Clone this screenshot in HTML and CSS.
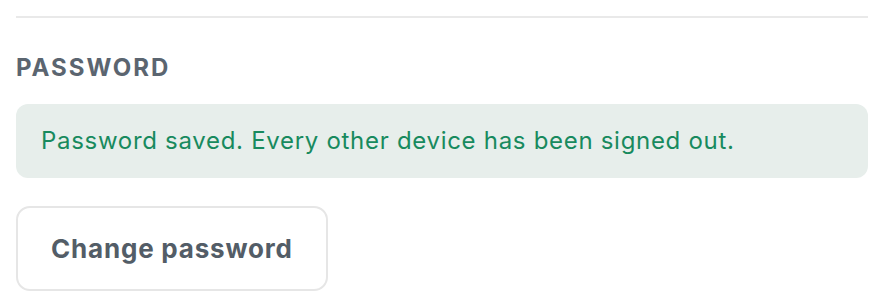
FILE: index.html
```html
<!DOCTYPE html>
<html lang="en">

<head>
    <meta charset="UTF-8">
    <meta name="viewport" content="width=device-width, initial-scale=1.0">
    <title>Password</title>
    <link rel="stylesheet" href="styles.css">
</head>

<body>
    <section class="settings-section">
        <h2 class="section-title">Password</h2>

        <div class="notice success">
            Password saved. Every other device has been signed out.
        </div>

        <button type="button" class="btn">Change password</button>
    </section>
</body>

</html>
```

FILE: styles.css
```css
* {
    margin: 0;
    padding: 0;
    box-sizing: border-box;
}

body {
    font-family: Inter, 'Noto Sans', sans-serif;
    background: white;
    padding: 16px;
}

.settings-section {
    border-top: 2px solid #e9e9e9;
    display: flex;
    flex-direction: column;
    align-items: flex-start;
}

.section-title {
    margin-top: 36px;
    font-size: 24px;
    font-weight: 700;
    letter-spacing: 2px;
    text-transform: uppercase;
    color: #5b6570;
    line-height: 28px;
}

.notice {
    align-self: stretch;
    margin-top: 22px;
    padding: 0 25px;
    height: 74px;
    display: flex;
    align-items: center;
    border-radius: 12px;
    font-size: 24px;
    letter-spacing: 0.7px;
    line-height: 30px;
}

.success {
    background: #e7eeeb;
    color: #188a5e;
}

.btn {
    margin-top: 28px;
    height: 85px;
    padding: 0 33px;
    background: white;
    border: 2px solid #e6e6e6;
    border-radius: 14px;
    font-family: inherit;
    font-size: 26px;
    font-weight: 700;
    letter-spacing: 0.8px;
    color: #535d67;
    cursor: pointer;
}
```
